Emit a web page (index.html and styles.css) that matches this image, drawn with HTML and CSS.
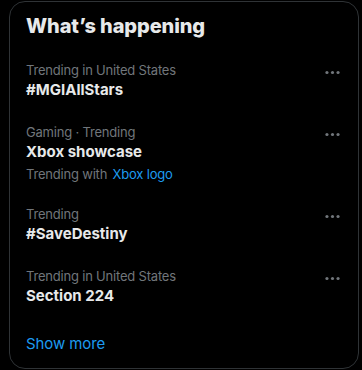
FILE: index.html
```html
<!DOCTYPE html>
<html lang="en">
<head>
    <meta charset="UTF-8">
    <meta name="viewport" content="width=device-width, initial-scale=1.0">
    <title>What's happening</title>
    <link rel="stylesheet" href="styles.css">
</head>
<body>
    <div class="page">
        <section class="card">
            <h2 class="card-title">What’s happening</h2>

            <!-- Trend 1 -->
            <div class="trend">
                <div class="trend-text">
                    <div class="meta">Trending in United States</div>
                    <div class="topic">#MGIAllStars</div>
                </div>
                <button class="more" aria-label="More">
                    <svg viewBox="0 0 24 24"><circle cx="5" cy="12" r="2"/><circle cx="12" cy="12" r="2"/><circle cx="19" cy="12" r="2"/></svg>
                </button>
            </div>

            <!-- Trend 2 -->
            <div class="trend">
                <div class="trend-text">
                    <div class="meta">Gaming · Trending</div>
                    <div class="topic">Xbox showcase</div>
                    <div class="meta with">Trending with <a href="#" class="link">Xbox logo</a></div>
                </div>
                <button class="more" aria-label="More">
                    <svg viewBox="0 0 24 24"><circle cx="5" cy="12" r="2"/><circle cx="12" cy="12" r="2"/><circle cx="19" cy="12" r="2"/></svg>
                </button>
            </div>

            <!-- Trend 3 -->
            <div class="trend">
                <div class="trend-text">
                    <div class="meta">Trending</div>
                    <div class="topic">#SaveDestiny</div>
                </div>
                <button class="more" aria-label="More">
                    <svg viewBox="0 0 24 24"><circle cx="5" cy="12" r="2"/><circle cx="12" cy="12" r="2"/><circle cx="19" cy="12" r="2"/></svg>
                </button>
            </div>

            <!-- Trend 4 -->
            <div class="trend">
                <div class="trend-text">
                    <div class="meta">Trending in United States</div>
                    <div class="topic">Section 224</div>
                </div>
                <button class="more" aria-label="More">
                    <svg viewBox="0 0 24 24"><circle cx="5" cy="12" r="2"/><circle cx="12" cy="12" r="2"/><circle cx="19" cy="12" r="2"/></svg>
                </button>
            </div>

            <a href="#" class="show-more">Show more</a>
        </section>
    </div>
</body>
</html>
```

FILE: styles.css
```css
body {
    margin: 0;
    padding: 0;
    background-color: #000;
    font-family: Inter, "Noto Sans", sans-serif;
    color: #e7e9ea;
}
.page {
    padding: 1px 3px 0 9px;
}
.card {
    height: 368px;
    box-sizing: border-box;
    border: 1px solid #2f3336;
    border-radius: 16px;
    background: #000;
}
.card-title {
    margin: 0;
    padding: 12px 16px;
    font-size: 20px;
    line-height: 24px;
    font-weight: 800;
    letter-spacing: -0.1px;
    color: #e7e9ea;
}
.trend {
    display: flex;
    justify-content: space-between;
    align-items: flex-start;
    padding: 12px 16px;
}
.meta {
    font-size: 13px;
    line-height: 16px;
    letter-spacing: -0.2px;
    color: #71767b;
}
.meta.with {
    margin-top: 4px;
}
.topic {
    margin-top: 2px;
    font-size: 15px;
    line-height: 20px;
    font-weight: 700;
    color: #e7e9ea;
}
.link {
    color: #1d9bf0;
    text-decoration: none;
    margin-left: 2px;
}
.more {
    background: none;
    border: none;
    padding: 0;
    margin-top: 1px;
    margin-right: 0;
    width: 19px;
    height: 19px;
    cursor: pointer;
}
.more svg {
    width: 19px;
    height: 19px;
    fill: #71767b;
}
.show-more {
    display: block;
    padding: 16px;
    font-size: 15px;
    line-height: 20px;
    letter-spacing: -0.1px;
    color: #1d9bf0;
    text-decoration: none;
}
```
